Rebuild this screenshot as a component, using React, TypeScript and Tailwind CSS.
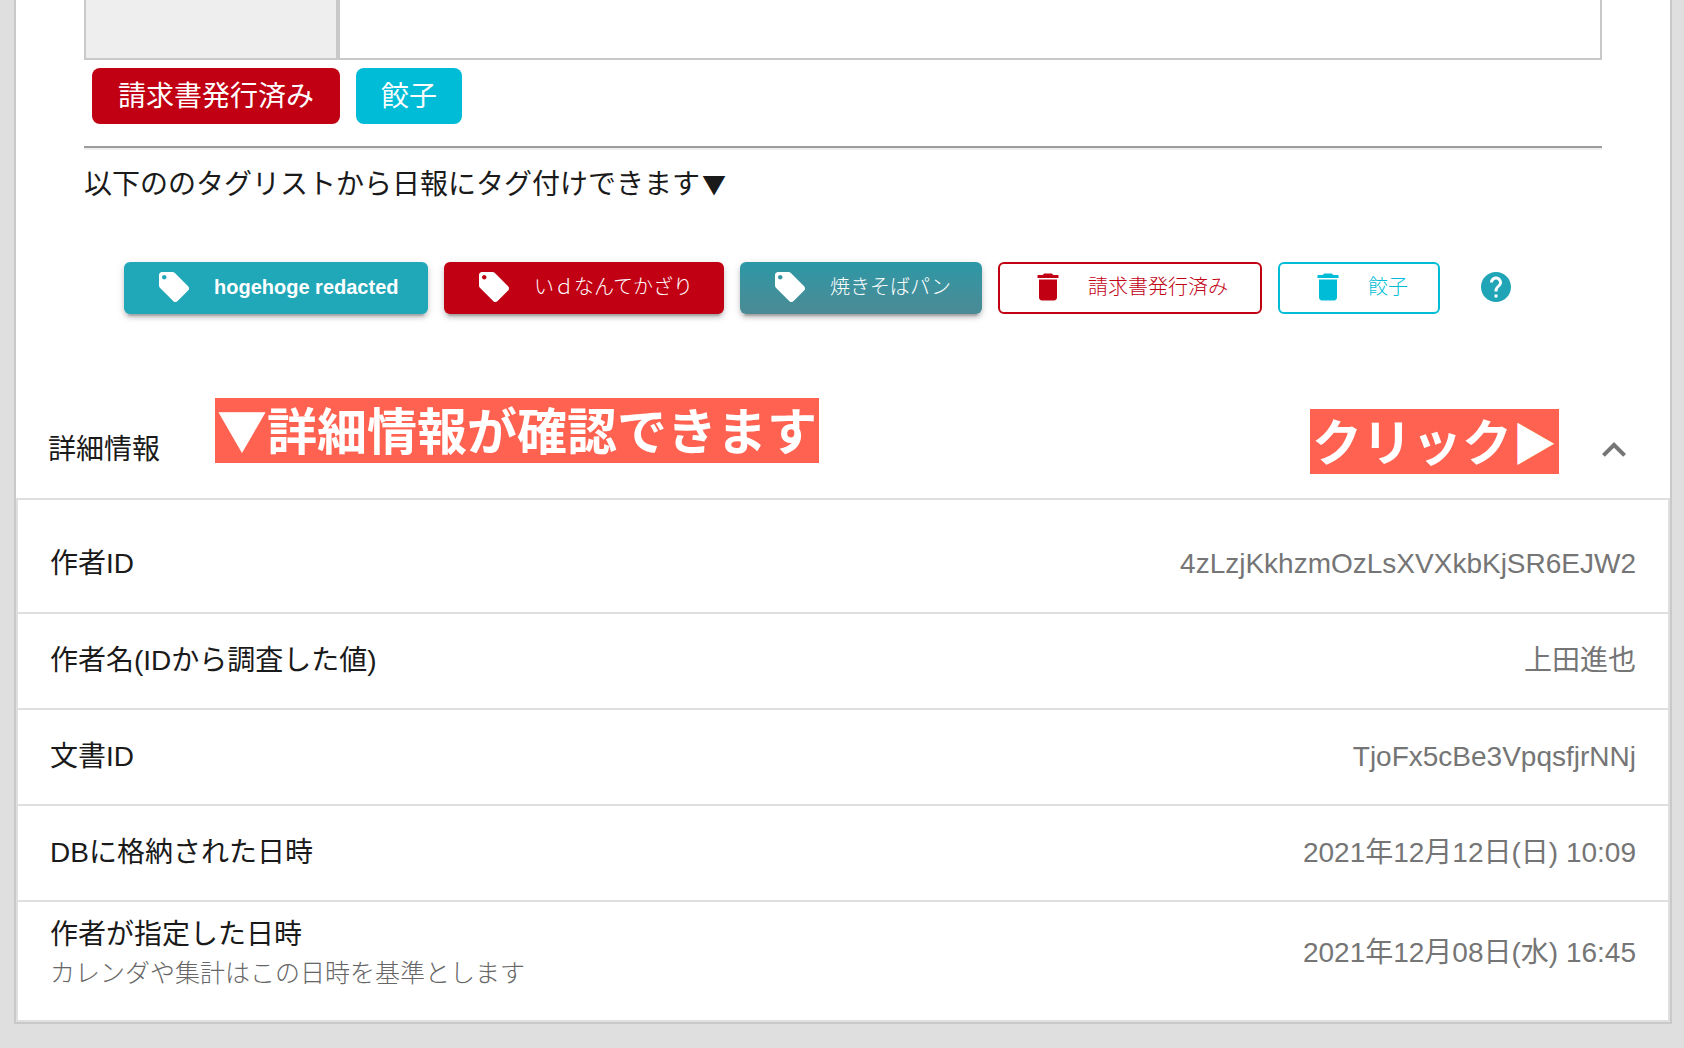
import { useState, type ReactNode } from "react";
import { MdDelete, MdExpandLess, MdHelp, MdLocalOffer } from "react-icons/md";

const attached = [
  { name: "請求書発行済み", style: "bg-[#c20013] w-[248px]" },
  { name: "餃子", style: "bg-[#00bcd7] w-[106px]" },
];

const raised =
  "text-white shadow-[0_6px_2px_-4px_rgba(0,0,0,0.2),0_4px_4px_0_rgba(0,0,0,0.14),0_2px_10px_0_rgba(0,0,0,0.12)]";

const tags = [
  { name: "hogehoge redacted", added: false, style: `${raised} bg-[#20a7b8] w-[304px]`, text: "font-bold" },
  { name: "いｄなんてかざり", added: false, style: `${raised} bg-[#c20013] w-[280px]`, text: "font-light" },
  { name: "焼きそばパン", added: false, style: `${raised} bg-linear-to-b from-[#2b98a6] to-[#4a8a94] w-[242px]`, text: "font-light" },
  { name: "請求書発行済み", added: true, style: "border-2 border-[#c20013] text-[#c20013] w-[264px]", text: "font-light" },
  { name: "餃子", added: true, style: "border-2 border-[#00bcd7] text-[#00bcd7] w-[162px]", text: "font-light" },
];

const details = [
  { label: "作者ID", value: "4zLzjKkhzmOzLsXVXkbKjSR6EJW2" },
  { label: "作者名(IDから調査した値)", value: "上田進也" },
  { label: "文書ID", value: "TjoFx5cBe3VpqsfjrNNj" },
  { label: "DBに格納された日時", value: "2021年12月12日(日) 10:09" },
  {
    label: "作者が指定した日時",
    note: "カレンダや集計はこの日時を基準とします",
    value: "2021年12月08日(水) 16:45",
  },
];

function TagSection() {
  return (
    <section className="px-[68px]">
      <div className="flex h-[60px] border-x-2 border-b-2 border-[#c9c9c9]">
        <div className="w-[254px] shrink-0 border-r-4 border-[#c9c9c9] bg-[#eeeeee]" />
        <div className="flex-1" />
      </div>
      <ul className="mt-2 ml-2 flex gap-4">
        {attached.map((tag) => (
          <li
            key={tag.name}
            className={`flex h-14 items-center justify-center rounded-lg pt-0.5 text-white ${tag.style}`}
          >
            {tag.name}
          </li>
        ))}
      </ul>
      <hr className="mt-[22px] h-1 border-t-2 border-b-2 border-t-[#9c9c9c] border-b-[#eeeeee]" />
      <p className="mt-[15px] leading-10">
        以下ののタグリストから日報にタグ付けできます
        <span className="pl-0.5 font-['Noto_Sans_CJK_JP',sans-serif] text-2xl leading-none">▼</span>
      </p>
      <div className="mt-[57px] ml-10 flex items-center gap-4">
        {tags.map((tag) => (
          <button
            key={tag.name}
            type="button"
            className={`flex h-[52px] items-center gap-[22px] rounded-md pb-0.5 text-xl whitespace-nowrap ${tag.added ? "pl-[30px]" : "pl-8"} ${tag.style}`}
          >
            {tag.added ? <MdDelete className="size-9 shrink-0" /> : <MdLocalOffer className="size-9 shrink-0" />}
            <span className={tag.text}>{tag.name}</span>
          </button>
        ))}
        <button type="button" aria-label="ヘルプ" className="ml-[22px] pb-0.5 text-[#1fa5b5]">
          <MdHelp className="size-9" />
        </button>
      </div>
    </section>
  );
}

function Callout({ place, children }: { place: string; children: ReactNode }) {
  return (
    <strong
      className={`absolute h-[65px] bg-[#ff6250] px-0.5 font-['Noto_Sans_CJK_JP',sans-serif] text-[50px] leading-[60px] font-bold whitespace-nowrap text-white ${place}`}
    >
      {children}
    </strong>
  );
}

function Details() {
  const [open, setOpen] = useState(true);
  return (
    <section className="mt-[88px]">
      <button
        type="button"
        aria-expanded={open}
        onClick={() => setOpen(!open)}
        className="relative flex h-24 w-full items-center justify-between px-8"
      >
        <span>詳細情報</span>
        <MdExpandLess className={`size-12 text-[#757575] ${open ? "" : "rotate-180"}`} />
        <Callout place="-top-1 left-[199px]">▼詳細情報が確認できます</Callout>
        <Callout place="top-[7px] right-[111px]">
          クリック<span className="text-[45px] leading-none">▶</span>
        </Callout>
      </button>
      {open && (
        <dl className="divide-y-2 divide-[#dfdfdf] border-2 border-[#dfdfdf]">
          {details.map((row) => (
            <div
              key={row.label}
              className="flex min-h-24 items-center justify-between px-8 first:min-h-[114px] first:pt-4 last:min-h-[118px] last:pb-4"
            >
              <dt className="leading-10">
                {row.label}
                {row.note && <small className="block text-[25px] leading-9 font-light text-[#666666]">{row.note}</small>}
              </dt>
              <dd className="leading-10 text-[#757575]">{row.value}</dd>
            </div>
          ))}
        </dl>
      )}
    </section>
  );
}

export default function App() {
  return (
    <div className="min-h-screen bg-[#dfdfdf] pr-3 pb-6 pl-3.5 font-['Liberation_Sans','Noto_Sans_CJK_JP',sans-serif] text-[28px] text-[#1a1a1a]">
      <main className="border-x-2 border-b-2 border-[#c9c9c9] bg-white">
        <TagSection />
        <Details />
      </main>
    </div>
  );
}
